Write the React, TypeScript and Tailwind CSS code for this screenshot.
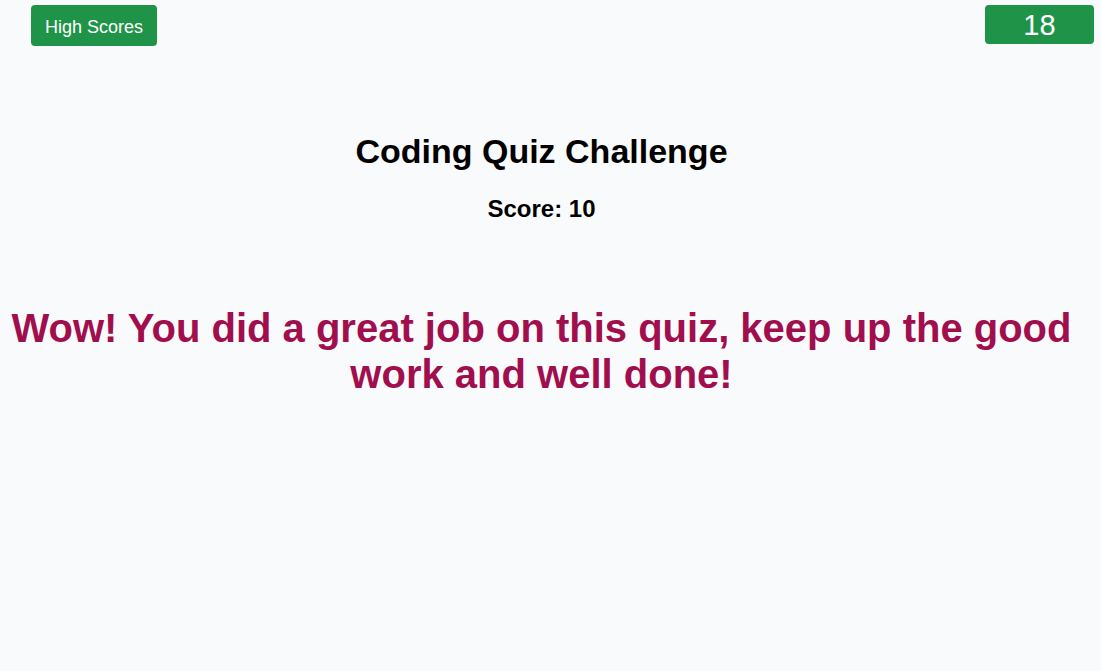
export default function App() {
  return (
    <div className="min-h-[671px] w-full bg-[#f9fafc] text-black" style={{ fontFamily: '"Liberation Sans", Arial, sans-serif' }}>
      <div className="flex items-start justify-between pl-[31px] pr-[7px] pt-[5px]">
        <button className="h-[41px] w-[126px] rounded-[4px] bg-[#1f9448] pt-[3px] text-[18px] text-white">High Scores</button>
        <div className="flex h-[39px] w-[109px] items-center justify-center rounded-[4px] bg-[#1f9448] pt-[3px] text-[29px] text-white">18</div>
      </div>
      <div className="w-[1083px] text-center">
        <h1 className="mt-[85px] text-[34px] font-bold leading-[40px]">Coding Quiz Challenge</h1>
        <h3 className="mt-[24px] text-[24px] font-bold leading-[28px]">Score: 10</h3>
        <p className="mt-[82px] text-[40px] font-bold leading-[46px] text-[#a10e4e]">
          Wow! You did a great job on this quiz, keep up the good work and well done!
        </p>
      </div>
    </div>
  );
}
